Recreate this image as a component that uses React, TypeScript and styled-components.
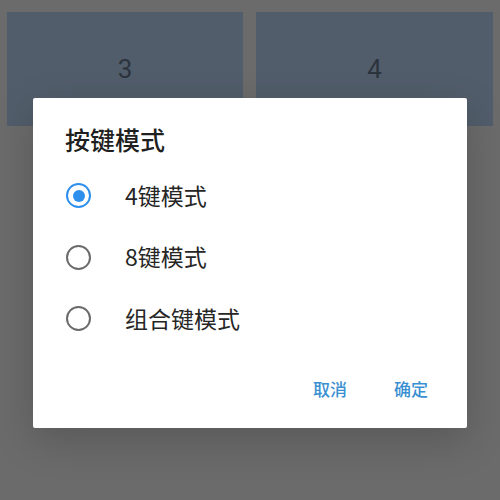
import styled, { createGlobalStyle } from 'styled-components';

const GlobalStyle = createGlobalStyle`
  html, body {
    margin: 0;
    padding: 0;
    background: #6b6b6b;
    font-family: "Noto Sans CJK SC", "Noto Sans", Roboto, sans-serif;
  }
`;

const modes = ['4键模式', '8键模式', '组合键模式'];

export default function App() {
  return (
    <>
      <GlobalStyle />
      <Page>
        <TileGrid>
          <Tile>3</Tile>
          <Tile>4</Tile>
        </TileGrid>
        <Overlay>
          <Dialog>
            <Title>按键模式</Title>
            <Options>
              {modes.map((m, i) => (
                <Option key={m}>
                  <Radio $checked={i === 0} />
                  <Label>{m}</Label>
                </Option>
              ))}
            </Options>
            <Actions>
              <ActionButton>取消</ActionButton>
              <ActionButton>确定</ActionButton>
            </Actions>
          </Dialog>
        </Overlay>
      </Page>
    </>
  );
}

const Page = styled.div`
  position: relative;
  width: 500px;
  height: 500px;
  overflow: hidden;
  background: #6b6b6b;
`;

const TileGrid = styled.div`
  display: grid;
  grid-template-columns: 236px 237px;
  gap: 13px;
  padding: 12px 7px;
`;

const Tile = styled.div`
  height: 114px;
  background: #525d6b;
  display: flex;
  align-items: center;
  justify-content: center;
  color: #2c343e;
  font-family: Roboto, "Noto Sans", sans-serif;
  font-size: 26px;
`;

const Overlay = styled.div`
  position: absolute;
  inset: 0;
  display: flex;
  justify-content: center;
  align-items: flex-start;
  padding-top: 98px;
`;

const Dialog = styled.div`
  width: 434px;
  height: 330px;
  box-sizing: border-box;
  background: #ffffff;
  border-radius: 2px;
  box-shadow: 0 12px 40px rgba(0, 0, 0, 0.18);
  display: flex;
  flex-direction: column;
  padding-top: 25px;
`;

const Title = styled.div`
  padding: 0 32px;
  font-size: 25px;
  line-height: 32px;
  font-weight: 500;
  color: #1f1f1f;
`;

const Options = styled.div`
  display: flex;
  flex-direction: column;
  margin-top: 10px;
`;

const Option = styled.div`
  height: 61.5px;
  display: flex;
  align-items: center;
  padding-left: 33px;
  gap: 34px;
`;

const Radio = styled.span<{ $checked: boolean }>`
  width: 25px;
  height: 25px;
  box-sizing: border-box;
  border-radius: 50%;
  border: 2.5px solid ${(p) => (p.$checked ? '#2e8fec' : '#6a6a6a')};
  display: flex;
  align-items: center;
  justify-content: center;
  &::after {
    content: '';
    width: 12px;
    height: 12px;
    border-radius: 50%;
    background: #2e8fec;
    display: ${(p) => (p.$checked ? 'block' : 'none')};
  }
`;

const Label = styled.span`
  font-size: 23px;
  line-height: 30px;
  font-weight: 400;
  color: #262626;
  padding-bottom: 2px;
`;

const Actions = styled.div`
  display: flex;
  justify-content: flex-end;
  gap: 47px;
  padding: 27px 39px 0 0;
`;

const ActionButton = styled.span`
  font-size: 17px;
  line-height: 24px;
  font-weight: 500;
  color: #3a8fd2;
`;
